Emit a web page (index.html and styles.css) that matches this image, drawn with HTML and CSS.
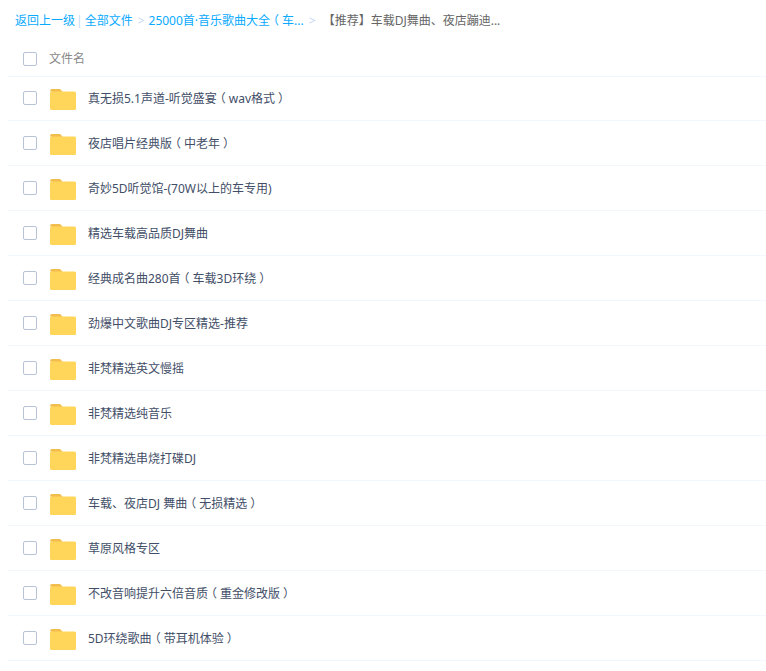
FILE: index.html
```html
<!DOCTYPE html>
<html lang="zh-CN">
<head>
    <meta charset="UTF-8">
    <title>文件列表</title>
    <link rel="stylesheet" href="styles.css">
</head>
<body>
    <svg class="defs" width="0" height="0">
        <symbol id="folder" viewBox="0 0 26 21">
            <path d="M0 2a2 2 0 0 1 2-2h7a3 3 0 0 1 2.500 1.400L12.500 3H2z" fill="#f1bd4e"/>
            <path d="M0 4a1.500 1.500 0 0 1 1.500-1.500H24.500A1.500 1.500 0 0 1 26 4V19.500A1.500 1.500 0 0 1 24.500 21H1.500A1.500 1.500 0 0 1 0 19.500z" fill="#ffd659"/>
        </symbol>
    </svg>
    <div class="crumbs">
        <a href="#">返回上一级</a>
        <span class="bar">|</span>
        <a href="#">全部文件</a>
        <span class="arrow">&gt;</span>
        <a href="#">25000首·音乐歌曲大全<span class="br">（</span>车...</a>
        <span class="arrow">&gt;</span>
        <span class="current">【推荐】车载DJ舞曲、夜店蹦迪...</span>
    </div>
    <div class="list">
        <div class="head">
            <span class="check"></span>
            <span class="head-name">文件名</span>
        </div>
        <div class="row"><span class="check"></span><svg class="folder"><use href="#folder"/></svg><span class="name">真无损5.1声道-听觉盛宴<span class="br">（</span>wav格式<span class="br">）</span></span></div>
        <div class="row"><span class="check"></span><svg class="folder"><use href="#folder"/></svg><span class="name">夜店唱片经典版<span class="br">（</span>中老年<span class="br">）</span></span></div>
        <div class="row"><span class="check"></span><svg class="folder"><use href="#folder"/></svg><span class="name">奇妙5D听觉馆-(70W以上的车专用)</span></div>
        <div class="row"><span class="check"></span><svg class="folder"><use href="#folder"/></svg><span class="name">精选车载高品质DJ舞曲</span></div>
        <div class="row"><span class="check"></span><svg class="folder"><use href="#folder"/></svg><span class="name">经典成名曲280首<span class="br">（</span>车载3D环绕<span class="br">）</span></span></div>
        <div class="row"><span class="check"></span><svg class="folder"><use href="#folder"/></svg><span class="name">劲爆中文歌曲DJ专区精选-推荐</span></div>
        <div class="row"><span class="check"></span><svg class="folder"><use href="#folder"/></svg><span class="name">非梵精选英文慢摇</span></div>
        <div class="row"><span class="check"></span><svg class="folder"><use href="#folder"/></svg><span class="name">非梵精选纯音乐</span></div>
        <div class="row"><span class="check"></span><svg class="folder"><use href="#folder"/></svg><span class="name">非梵精选串烧打碟DJ</span></div>
        <div class="row"><span class="check"></span><svg class="folder"><use href="#folder"/></svg><span class="name">车载、夜店DJ 舞曲<span class="br">（</span>无损精选<span class="br">）</span></span></div>
        <div class="row"><span class="check"></span><svg class="folder"><use href="#folder"/></svg><span class="name">草原风格专区</span></div>
        <div class="row"><span class="check"></span><svg class="folder"><use href="#folder"/></svg><span class="name">不改音响提升六倍音质<span class="br">（</span>重金修改版<span class="br">）</span></span></div>
        <div class="row"><span class="check"></span><svg class="folder"><use href="#folder"/></svg><span class="name">5D环绕歌曲<span class="br">（</span>带耳机体验<span class="br">）</span></span></div>
    </div>
</body>
</html>
```

FILE: styles.css
```css
body {
    margin: 0;
    background: #fff;
    font-family: "Noto Sans", "Noto Sans CJK SC", sans-serif;
    font-size: 12px;
    color: #424e67;
    overflow: hidden;
}

.defs {
    position: absolute;
}

/* full width brackets sit centred in their box in the original font */
.br {
    font-feature-settings: "halt";
    padding: 0 3px;
}

.crumbs {
    height: 39px;
    padding-left: 15px;
    padding-top: 1px;
    box-sizing: border-box;
    display: flex;
    align-items: center;
    white-space: nowrap;
}

.crumbs a {
    color: #09aaff;
    text-decoration: none;
}

.crumbs .bar {
    color: #c5d8f3;
    margin: 0 2px 0 1px;
}

.crumbs .arrow {
    color: #c5d8f3;
    margin: 0 4px 0 5px;
}

.crumbs .current {
    color: #666;
    margin-left: 3px;
}

.list {
    margin-left: 8px;
}

.head {
    height: 34px;
    padding: 3px 0 0 15px;
    margin-bottom: -1px;
    display: flex;
    align-items: center;
    border-bottom: 1px solid #f2f6fd;
}

.head-name {
    margin-left: 12px;
    padding-bottom: 2px;
    color: #888;
}

.row {
    height: 44px;
    display: flex;
    align-items: center;
    padding-left: 15px;
    border-bottom: 1px solid #f2f6fd;
}

.check {
    width: 12px;
    height: 12px;
    border: 1px solid #b8c4d6;
    border-radius: 2px;
    flex-shrink: 0;
}

.folder {
    width: 26px;
    height: 21px;
    margin: 2px 0 0 13px;
    flex-shrink: 0;
}

.name {
    margin-left: 12px;
    white-space: nowrap;
}
```
